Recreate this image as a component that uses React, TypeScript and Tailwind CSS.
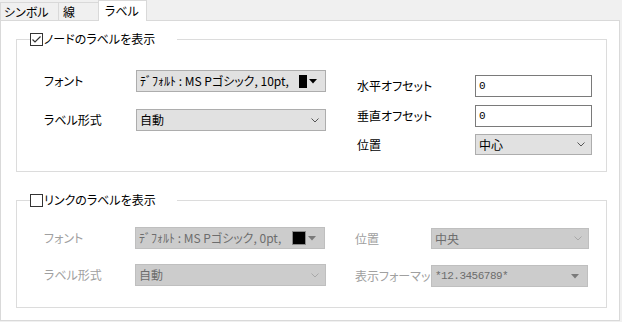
import React from "react";

const font = "font-['Noto_Sans_CJK_JP','Noto_Sans',sans-serif] [font-feature-settings:'palt'] text-[12px] leading-[14px]";

function CheckBox({ checked }: { checked: boolean }) {
  return (
    <span className="inline-flex w-[13px] h-[13px] border border-[#333333] bg-white items-center justify-center shrink-0">
      {checked && (
        <svg width="11" height="11" viewBox="0 0 11 11">
          <path d="M1.5 5.5 L4 8 L9.5 2.5" fill="none" stroke="#333333" strokeWidth="1.2" />
        </svg>
      )}
    </span>
  );
}

function Chevron({ color }: { color: string }) {
  return (
    <svg width="8" height="5" viewBox="0 0 8 5" className="shrink-0">
      <path d="M0.5 0.5 L4 4 L7.5 0.5" fill="none" stroke={color} strokeWidth="1" />
    </svg>
  );
}

function Tri({ color }: { color: string }) {
  return (
    <svg width="8" height="5" viewBox="0 0 8 5" className="shrink-0">
      <path d="M0 0 H8 L4 4.5 Z" fill={color} />
    </svg>
  );
}

function Select({ text, width, h = "h-[22px]", disabled, arrow = "chev", mono }: { text: string; width: string; h?: string; disabled?: boolean; arrow?: "chev" | "tri"; mono?: boolean }) {
  return (
    <div
      className={`${width} ${h} flex items-center pl-[3px] pr-[6px] border ${
        disabled ? "bg-[#cccccc] border-[#bfbfbf] text-[#6d6d6d]" : "bg-[#e1e1e1] border-[#adadad] text-black"
      }`}
    >
      <span className={`flex-1 whitespace-nowrap leading-[18px] ${mono ? "font-['Liberation_Mono',monospace] text-[11px] tracking-[-0.5px]" : ""}`}>{text}</span>
      {arrow === "chev" ? (
        <Chevron color={disabled ? "#a8a8a8" : "#555555"} />
      ) : (
        <span className="mr-[2px]">
          <Tri color={disabled ? "#7a7a7a" : "#000"} />
        </span>
      )}
    </div>
  );
}

function FontSelect({ size, disabled }: { size: string; disabled?: boolean }) {
  return (
    <div
      className={`w-[190px] h-[22px] flex items-center pl-[3px] pr-[8px] border ${
        disabled ? "bg-[#cccccc] border-[#bfbfbf] text-[#6d6d6d]" : "bg-[#e1e1e1] border-[#adadad] text-black"
      }`}
    >
      <span className="flex-1 whitespace-nowrap leading-[18px]">{`ﾃﾞﾌｫﾙﾄ : MS Pゴシック, ${size}pt,`}</span>
      {disabled ? (
        <span className="w-[14px] h-[14px] bg-black border border-[#8a8a8a] mr-[2px] shrink-0" />
      ) : (
        <span className="w-[8px] h-[13px] bg-black mr-[2px] shrink-0" />
      )}
      <Tri color={disabled ? "#7a7a7a" : "#000"} />
    </div>
  );
}

function Input({ value }: { value: string }) {
  return (
    <div className="w-[117px] h-[22px] bg-white border border-[#7a7a7a] flex items-center pl-[3px]">
      <span className="font-['Liberation_Mono',monospace] text-[11px] leading-[16px]">{value}</span>
    </div>
  );
}

export default function App() {
  return (
    <div className={`w-[622px] h-[322px] bg-[#f0f0f0] text-black ${font}`}>
      <div className="flex items-end h-[20px]">
        <div className="w-[58px] h-[18px] border-t border-l border-[#d9d9d9] flex items-center pl-[3px]">シンボル</div>
        <div className="w-[40px] h-[18px] border-t border-l border-[#d9d9d9] flex items-center pl-[4px]">線</div>
        <div className="relative z-10 w-[49px] h-[21px] -mb-px bg-white border-t border-x border-[#d9d9d9] flex items-center pl-[6px] pb-[1px]">ラベル</div>
      </div>
      <div className="w-[620px] h-[301px] bg-white border border-[#d9d9d9] pt-[11px] pl-[15px] pr-[12px]">
        <fieldset className="border border-[#dcdcdc] p-0 m-0 min-w-0">
          <legend className="ml-[13px] w-[147px] h-[14px] flex items-center gap-[1px] p-0">
            <CheckBox checked />
            <span className="whitespace-nowrap">ノードのラベルを表示</span>
          </legend>
          <div className="flex items-start pl-[27px] pb-[16px]">
            <div className="flex flex-col gap-[17px] pt-[24px]">
              <div className="flex items-center h-[22px]">
                <span className="w-[92px]">フォント</span>
                <FontSelect size="10" />
              </div>
              <div className="flex items-center h-[22px]">
                <span className="w-[92px]">ラベル形式</span>
                <Select text="自動" width="w-[190px]" />
              </div>
            </div>
            <div className="flex flex-col ml-[31px] pt-[29px]">
              <div className="flex items-center h-[22px]">
                <span className="w-[118px]">水平オフセット</span>
                <Input value="0" />
              </div>
              <div className="flex items-center h-[22px] mt-[8px]">
                <span className="w-[118px]">垂直オフセット</span>
                <Input value="0" />
              </div>
              <div className="flex items-center h-[21px] mt-[7px]">
                <span className="w-[118px]">位置</span>
                <Select text="中心" width="w-[117px]" h="h-[21px]" />
              </div>
            </div>
          </div>
        </fieldset>

        <fieldset className="border border-[#dcdcdc] p-0 m-0 mt-[21px] min-w-0">
          <legend className="ml-[13px] w-[147px] h-[14px] flex items-center gap-[1px] p-0">
            <CheckBox checked={false} />
            <span className="whitespace-nowrap">リンクのラベルを表示</span>
          </legend>
          <div className="flex items-start pl-[27px] pb-[20px] text-[#a0a0a0]">
            <div className="flex flex-col gap-[15px] pt-[20px]">
              <div className="flex items-center h-[22px]">
                <span className="w-[91px]">フォント</span>
                <FontSelect size="0" disabled />
              </div>
              <div className="flex items-center h-[22px]">
                <span className="w-[91px]">ラベル形式</span>
                <Select text="自動" width="w-[191px]" disabled />
              </div>
            </div>
            <div className="flex flex-col ml-[29px] pt-[21px]">
              <div className="flex items-center h-[21px]">
                <span className="w-[76px]">位置</span>
                <Select text="中央" width="w-[158px]" h="h-[21px]" disabled />
              </div>
              <div className="flex items-center h-[22px] mt-[16px]">
                <span className="w-[76px] whitespace-nowrap overflow-hidden leading-[18px]">表示フォーマット</span>
                <Select text="*12.3456789*" width="w-[157px]" disabled arrow="tri" mono />
              </div>
            </div>
          </div>
        </fieldset>
      </div>
    </div>
  );
}
